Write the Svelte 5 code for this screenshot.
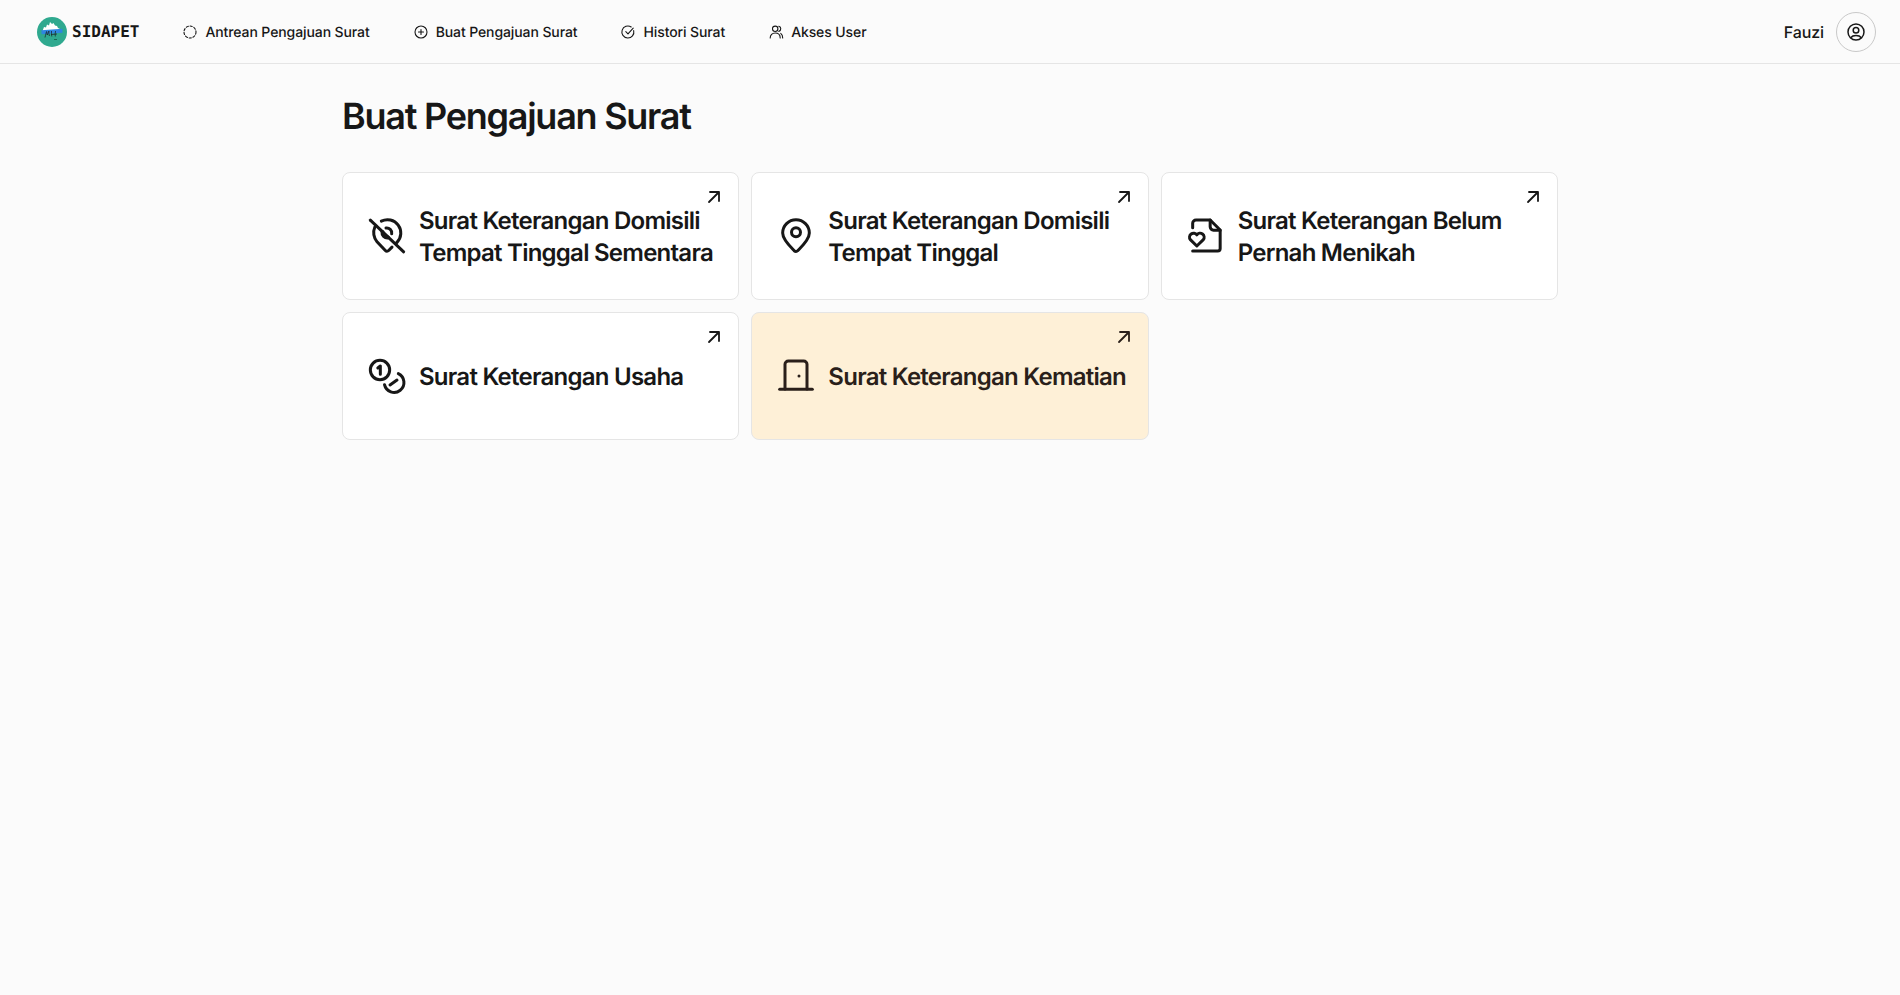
<script lang="ts">
  const navItems = [
    { label: 'Antrean Pengajuan Surat', icon: 'queue' },
    { label: 'Buat Pengajuan Surat', icon: 'plus' },
    { label: 'Histori Surat', icon: 'check' },
    { label: 'Akses User', icon: 'users' }
  ];

  const letters = [
    { title: 'Surat Keterangan Domisili Tempat Tinggal Sementara', icon: 'pinOff', active: false },
    { title: 'Surat Keterangan Domisili Tempat Tinggal', icon: 'pin', active: false },
    { title: 'Surat Keterangan Belum Pernah Menikah', icon: 'fileHeart', active: false },
    { title: 'Surat Keterangan Usaha', icon: 'coins', active: false },
    { title: 'Surat Keterangan Kematian', icon: 'door', active: true }
  ];
</script>

{#snippet navIcon(name: string)}
  <svg class="nav-icon" viewBox="0 0 16 16" fill="none" stroke="currentColor" stroke-width="1.1" stroke-linecap="round" stroke-linejoin="round">
    {#if name === 'queue'}
      <circle cx="8" cy="8" r="6" stroke-dasharray="2.2 1.75" />
    {:else if name === 'plus'}
      <circle cx="8" cy="8" r="6" />
      <path d="M8 5.5v5M5.5 8h5" />
    {:else if name === 'check'}
      <path d="M13.7 6.6A6 6 0 1 1 11.2 3" />
      <path d="M5.8 7.6 8 9.8l5.2-5.6" />
    {:else}
      <circle cx="7.2" cy="4.8" r="2.7" />
      <path d="M2.2 14c0-3 2-5 5-5s5 2 5 5" />
      <path d="M10.8 2.2a2.7 2.7 0 0 1 0 5.2M12.8 9.4c1.2.7 1.9 2.4 1.9 4.6" />
    {/if}
  </svg>
{/snippet}

{#snippet cardIcon(name: string)}
  <svg class="card-icon" viewBox="0 0 24 24" fill="none" stroke="currentColor" stroke-width="1.8" stroke-linecap="round" stroke-linejoin="round">
    {#if name === 'pinOff'}
      <path d="M2 2.5 22 21.5" />
      <path d="M8.6 3.1A8 8 0 0 1 18 15.8l-.8.8" />
      <path d="M4.7 6.6C3.4 9.6 4 13.2 6 15.4l5 5.3a1.4 1.4 0 0 0 2 0l2-2" />
      <path d="M11.4 7.2a3 3 0 0 1 3.4 3.4" />
      <path d="M9.3 9.6a3 3 0 0 0 3.3 3.3" stroke-width="2.4" />
    {:else if name === 'pin'}
      <path d="M20 10.2c0 4-5 8.6-7 10.7a1.4 1.4 0 0 1-2 0C9 18.8 4 14.2 4 10.2a8 8 0 0 1 16 0z" />
      <circle cx="12" cy="9.8" r="2.7" />
    {:else if name === 'fileHeart'}
      <path d="M4 7V4.4a2 2 0 0 1 2-2h8.5l6 6v11.1a1.5 1.5 0 0 1-1.5 1.5H4" />
      <path d="M14.5 2.4v4.1a2 2 0 0 0 2 2h4" />
      <path d="M6.5 18 2.6 14.2a2.4 2.4 0 0 1 3.9-2.9 2.4 2.4 0 0 1 3.9 2.9z" />
    {:else if name === 'coins'}
      <circle cx="7.8" cy="8.4" r="5.8" />
      <path d="M6.5 7.2 8 6v5" />
      <path d="M18.8 10.6A5.9 5.9 0 1 1 10.5 17.2" />
      <path d="M13.8 17.4 18 14.4" />
    {:else}
      <path d="M5.4 19.8V5a2 2 0 0 1 2-2h9.2a2 2 0 0 1 2 2v14.8" />
      <path d="M2.2 20h19.6" />
      <path d="M13.8 12v.01" />
    {/if}
  </svg>
{/snippet}

<header class="topbar">
  <div class="left">
    <a class="brand" href="#top">
      <svg class="logo" viewBox="0 0 30 30">
        <circle cx="15" cy="15" r="15" fill="#2fa98f" />
        <path d="M5.5 14 7 10l2 .5 1-3 2 1 1-3.500 2 2 1.500-1 1.500 2.500 2 .5 1 2 2 1v2.500z" fill="#fff" />
        <rect x="4.500" y="12.500" width="21" height="4" fill="#2f86e0" transform="rotate(-4 15 15)" />
        <path d="M8 20.500c.6-2.500 1-4.500 1.600-6 .2 1.500.3 2.600.7 3.500.6-1.500 1-3 1.600-4-.1 2 .1 3.500.5 5M14.500 14c-.2 2-.1 3.800.3 5.500M18.500 14c-.4 2-.4 3.800-.2 5.500M14 17.500l6-.5" fill="none" stroke="#1d2a2c" stroke-width="0.8" />
        <path d="M17 22.500h3" stroke="#14574a" stroke-width="0.8" />
      </svg>
      <span class="brand-name">SIDAPET</span>
    </a>
    <nav class="nav">
      {#each navItems as item}
        <a class="nav-link" href="#top">
          {@render navIcon(item.icon)}
          <span>{item.label}</span>
        </a>
      {/each}
    </nav>
  </div>
  <div class="user">
    <span class="user-name">Fauzi</span>
    <button class="user-button" aria-label="Akun">
      <svg viewBox="0 0 20 20" fill="none" stroke="currentColor" stroke-width="1.5" stroke-linecap="round" stroke-linejoin="round">
        <circle cx="10" cy="10" r="8" />
        <circle cx="10" cy="8.2" r="2.8" />
        <path d="M5 15.6c1-1.6 2.8-2.1 5-2.1s4 .5 5 2.1" />
      </svg>
    </button>
  </div>
</header>

<main class="content">
  <h1>Buat Pengajuan Surat</h1>
  <div class="grid">
    {#each letters as letter}
      <a class="card" class:active={letter.active} href="#top">
        {@render cardIcon(letter.icon)}
        <span class="card-title">{letter.title}</span>
        <svg class="arrow" viewBox="0 0 24 24" fill="none" stroke="currentColor" stroke-width="1.8" stroke-linecap="round" stroke-linejoin="round">
          <path d="M7 17 17 7M8 7h9v9" />
        </svg>
      </a>
    {/each}
  </div>
</main>

<style>
  :global(body) {
    background: #fbfbfb;
    color: #171717;
    font-family: Inter, 'Noto Sans', sans-serif;
    text-rendering: geometricPrecision;
  }

  a {
    color: inherit;
    text-decoration: none;
  }

  .topbar {
    display: flex;
    justify-content: space-between;
    align-items: center;
    height: 63px;
    padding: 0 24px 0 37px;
    border-bottom: 1px solid #e5e5e5;
  }

  .left {
    display: flex;
    align-items: center;
    gap: 43px;
  }

  .brand {
    display: flex;
    align-items: center;
    gap: 5px;
  }

  .logo {
    width: 30px;
    height: 30px;
  }

  .brand-name {
    font-family: 'DejaVu Sans Mono', 'Liberation Mono', monospace;
    font-size: 16px;
    font-weight: 700;
  }

  .nav {
    display: flex;
    gap: 43px;
  }

  .nav-link {
    display: flex;
    align-items: center;
    gap: 7px;
    font-size: 14px;
    font-weight: 500;
    letter-spacing: -0.1px;
  }

  .nav-link span {
    padding-top: 2px;
  }

  .nav-icon {
    width: 16px;
    height: 16px;
  }

  .user {
    display: flex;
    align-items: center;
    gap: 12px;
  }

  .user-name {
    font-size: 16px;
    font-weight: 500;
    letter-spacing: -0.1px;
  }

  .user-button {
    display: flex;
    align-items: center;
    justify-content: center;
    width: 40px;
    height: 40px;
    padding: 0;
    color: #171717;
    background: transparent;
    border: 1px solid #c9c9c9;
    border-radius: 50%;
  }

  .user-button svg {
    width: 20px;
    height: 20px;
  }

  .content {
    max-width: 1216px;
    margin: 0 auto;
    padding-top: 32px;
  }

  h1 {
    margin: 0 0 36px;
    font-size: 36px;
    line-height: 40px;
    font-weight: 600;
    letter-spacing: -1.25px;
  }

  .grid {
    display: grid;
    grid-template-columns: repeat(3, 1fr);
    gap: 12px;
  }

  .card {
    position: relative;
    display: flex;
    align-items: center;
    gap: 12px;
    height: 128px;
    box-sizing: border-box;
    padding: 2px 16px 0 24px;
    background: #fff;
    border: 1px solid #e5e5e5;
    border-radius: 8px;
  }

  .card.active {
    background: #fef0d7;
    color: #2a1f1a;
  }

  .card-icon {
    flex: none;
    width: 40px;
    height: 40px;
    margin-top: -2px;
  }

  .card-title {
    font-size: 24px;
    line-height: 32px;
    font-weight: 600;
    letter-spacing: -0.75px;
  }

  .arrow {
    position: absolute;
    top: 12px;
    right: 12px;
    width: 24px;
    height: 24px;
  }
</style>
